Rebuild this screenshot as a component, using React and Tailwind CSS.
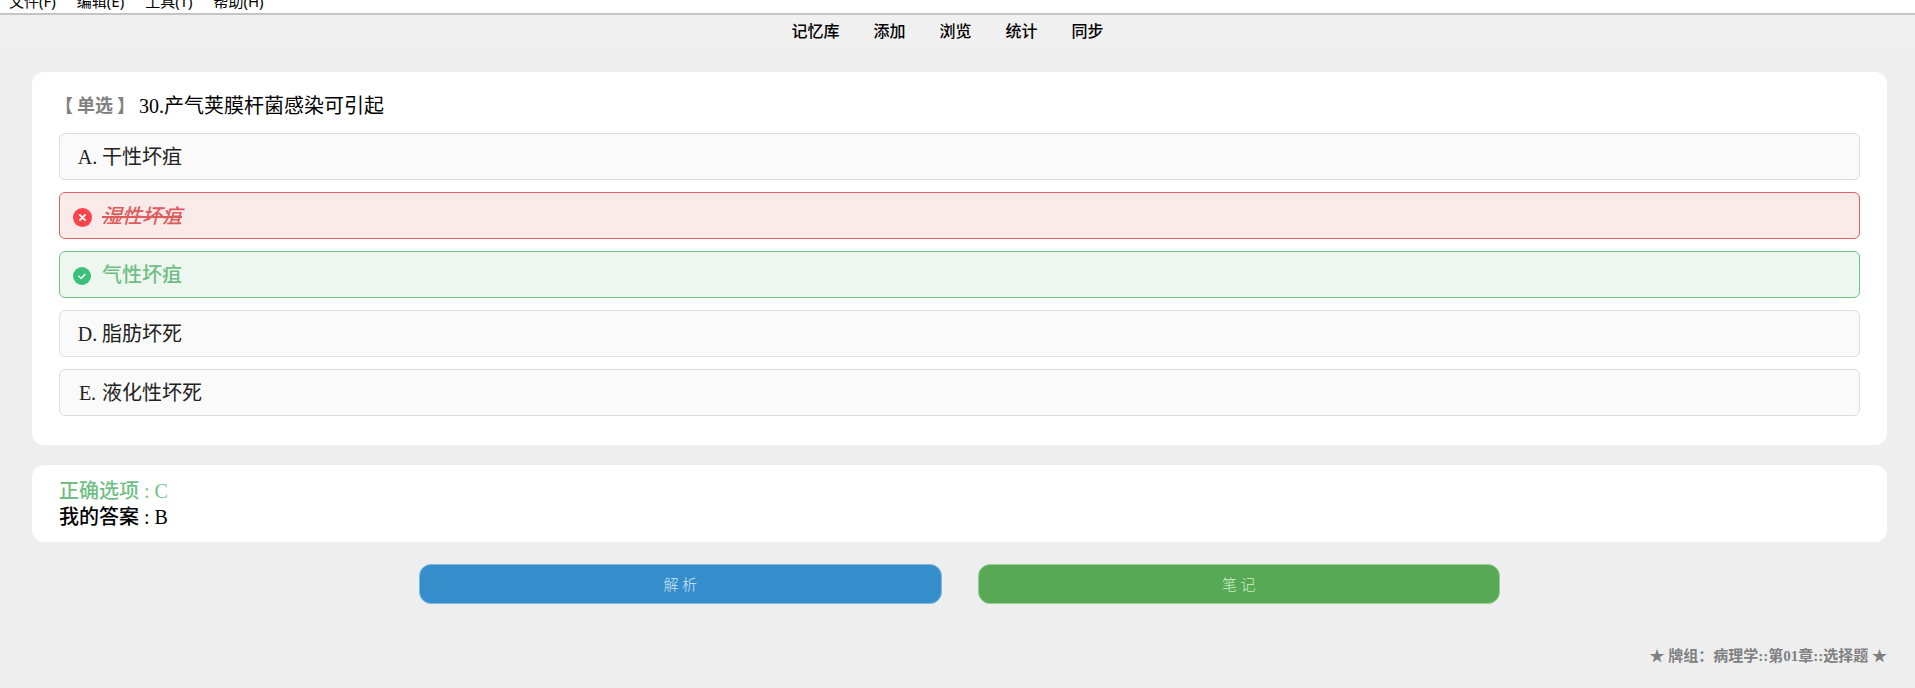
const menus = ["文件(F)", "编辑(E)", "工具(T)", "帮助(H)"];
const tabs = ["记忆库", "添加", "浏览", "统计", "同步"];

const options = [
  { letter: "A", text: "干性坏疽" },
  { letter: "B", text: "湿性坏疽", state: "wrong" },
  { letter: "C", text: "气性坏疽", state: "right" },
  { letter: "D", text: "脂肪坏死" },
  { letter: "E", text: "液化性坏死" },
];

const optionStyles = {
  wrong: "border-[#df6464] bg-[#fbeaea] text-[#df5c5c] font-medium",
  right: "border-[#6fc484] bg-[#edf7f0] text-[#6fbf85] font-medium",
  plain: "border-[#dddddd] bg-[#fafafa] text-[#222222]",
};

function WrongIcon() {
  return (
    <svg className="size-[19px]" viewBox="0 0 19 19" aria-hidden="true">
      <circle cx="9.5" cy="9.5" r="9.5" fill="#fb4349" />
      <path d="M6.9 6.9l5.2 5.2M12.1 6.9l-5.2 5.2" stroke="#fff" strokeWidth="1.9" strokeLinecap="round" />
    </svg>
  );
}

function RightIcon() {
  return (
    <svg className="size-[18px]" viewBox="0 0 18 18" aria-hidden="true">
      <circle cx="9" cy="9" r="9" fill="#3cbf76" />
      <path d="M5.9 9.3l2.2 2.1 4-4.2" fill="none" stroke="#fff" strokeWidth="1.4" strokeLinecap="round" strokeLinejoin="round" />
    </svg>
  );
}

function Option({ letter, text, state }) {
  return (
    <li>
      <button
        type="button"
        className={`flex h-[47px] w-full items-center rounded-md border pl-[13px] text-left ${optionStyles[state || "plain"]}`}
      >
        <span className="flex w-[29px] shrink-0 items-center">
          {state ? (
            <span className="pt-[3px]">{state === "wrong" ? <WrongIcon /> : <RightIcon />}</span>
          ) : (
            <span className="w-[29px] text-center">{letter}.</span>
          )}
        </span>
        <span className={state === "wrong" ? "italic line-through decoration-2" : ""}>{text}</span>
      </button>
    </li>
  );
}

export default function App() {
  return (
    <div className="min-h-screen bg-[#eeeeee] font-['Liberation_Serif','Noto_Sans_CJK_SC',serif] text-black">
      <nav className="flex h-[13px] items-end gap-[21px] overflow-hidden bg-white pb-0.5 pl-[9px] font-['Noto_Sans','Noto_Sans_CJK_SC',sans-serif] text-[15px] leading-5">
        {menus.map((m) => (
          <button key={m} type="button">{m}</button>
        ))}
      </nav>
      <header className="flex h-[34px] items-center justify-center gap-[34px] border-t-2 border-[#c4c4c4] bg-[#f0f0f0] pr-5 pb-0.5 font-['Noto_Sans_CJK_SC',sans-serif] text-base leading-6 font-medium">
        {tabs.map((t) => (
          <button key={t} type="button">{t}</button>
        ))}
      </header>

      <main className="px-7 pt-[25px] pl-8">
        <section className="rounded-xl bg-white px-[27px] pt-5 pb-[29px] text-xl leading-7">
          <h1 className="mb-[13px] flex items-center">
            <span className="-ml-1 flex gap-1 text-lg font-bold text-[#808080]">
              <span>【</span>
              <span>单选</span>
              <span>】</span>
            </span>
            <span className="ml-1">30.产气荚膜杆菌感染可引起</span>
          </h1>
          <ul className="flex flex-col gap-3">
            {options.map((o) => (
              <Option key={o.letter} {...o} />
            ))}
          </ul>
        </section>

        <section className="mt-5 rounded-xl bg-white px-[27px] pt-[13px] pb-3 text-xl leading-[26px] font-medium">
          <p className="text-[#6fbf85]">正确选项 : C</p>
          <p>我的答案 : B</p>
        </section>

        <div className="mx-auto mt-[22px] grid max-w-[1081px] grid-cols-2 gap-9 font-['Noto_Sans_CJK_SC',sans-serif] text-[15px] font-light">
          <button type="button" className="h-10 rounded-xl border border-[#7db8e2] bg-[#358ecb] text-[#cfe6f7]">解 析</button>
          <button type="button" className="h-10 rounded-xl border border-[#93cf93] bg-[#57a955] text-[#cdeecb]">笔 记</button>
        </div>

        <footer className="mt-10 text-right text-[15px] leading-6 font-bold text-[#808080]">
          ★ 牌组：病理学::第01章::选择题 ★
        </footer>
      </main>
    </div>
  );
}
